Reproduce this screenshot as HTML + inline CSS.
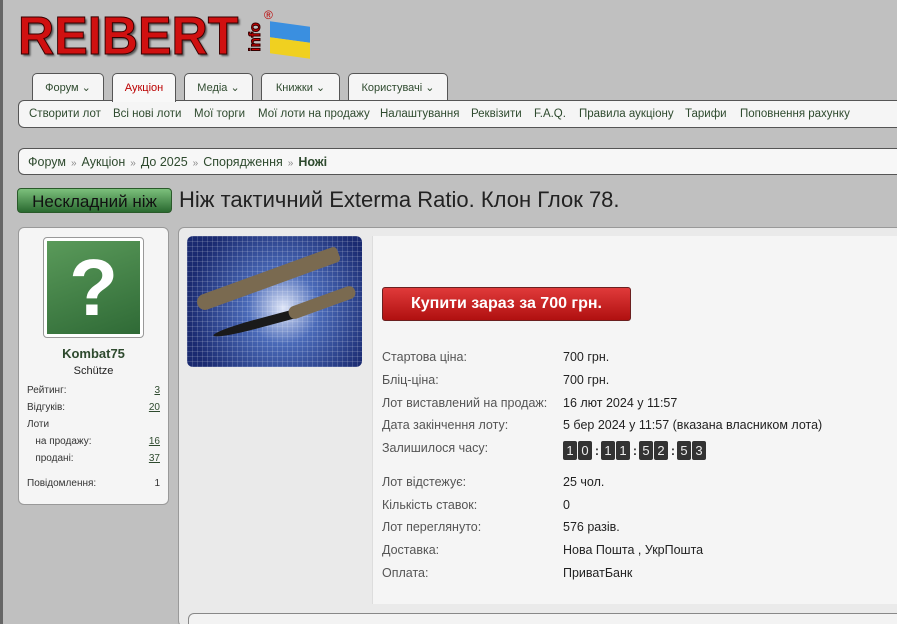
<!DOCTYPE html>
<html><head><meta charset="utf-8"><style>
*{box-sizing:border-box;margin:0;padding:0}
html,body{width:897px;height:624px;overflow:hidden}
body{background:#c0c0c0;font-family:"Liberation Sans",Arial,sans-serif;font-size:11px;color:#333;position:relative}
.a{position:absolute}
.logo{left:18px;top:10px;font-family:"Liberation Sans",sans-serif;font-weight:bold;font-size:54px;color:#d01010;letter-spacing:0px;-webkit-text-stroke:1px #300;line-height:52px;text-shadow:2px 2px 2px #555;transform:scaleX(0.93);transform-origin:left}
.tab{top:73px;height:28px;background:#f5f5f5;border:1px solid #555;border-bottom:none;border-radius:5px 5px 0 0;text-align:center;line-height:29px;font-size:11px;color:#2e4a2e}
.tab.act{background:#f8f8f8;color:#b00;height:29px;z-index:2}
.sub{left:18px;top:100px;width:900px;height:28px;background:#f5f5f5;border:1px solid #555;border-radius:6px;}
.sub span{position:absolute;top:7px;font-size:11.5px;color:#2e4a2e}
.bc{left:18px;top:148px;width:900px;height:27px;background:#f7f7f7;border:1px solid #555;border-radius:6px;padding:6px 9px;font-size:12.5px;color:#2e4a2e}
.bc i{font-style:normal;color:#888;margin:0 5px;font-size:10px}
.badge{left:17px;top:188px;width:155px;height:25px;border-radius:4px;background:linear-gradient(#7cc07c,#2a6a30);border:1px solid #2a5a2a;color:#111;font-size:17px;line-height:25px;text-align:center}
.title{left:179px;top:187px;font-size:22px;color:#222}
.user{left:18px;top:227px;width:151px;height:278px;background:#f5f5f5;border:1px solid #999;border-radius:6px}
.av{left:24px;top:9px;width:101px;height:101px;border:1px solid #999;border-radius:4px;background:#fff;padding:3px}
.av div{width:100%;height:100%;background:linear-gradient(160deg,#5a9a5a,#2f6a36);color:#fff;font-size:80px;font-weight:bold;text-align:center;line-height:94px}
.st{left:8px;width:133px;font-size:10px;color:#333}
.st u{float:right;color:#2e4a2e}
.main{left:178px;top:227px;width:730px;height:400px;background:#eaeaea;border:1px solid #999;border-radius:6px}
.img{left:187px;top:236px;width:175px;height:131px;border-radius:6px;background:radial-gradient(circle at 55% 55%,#dfe6f8,#4a6ab8 30%,#1a2a70 80%);overflow:hidden}
.info{left:372px;top:236px;width:530px;height:368px;background:#f5f5f5;border-left:1px solid #ddd}
.btn{left:382px;top:287px;width:249px;height:34px;background:linear-gradient(#e03a3a,#b01010);border:1px solid #6a2020;border-radius:3px;color:#fff;font-weight:bold;font-size:16px;text-align:center;line-height:32px}
.l{left:382px;top:0;font-size:12.5px;color:#555}
.v{left:563px;font-size:12.5px;color:#222}
.d{display:inline-block;width:14px;height:19px;background:#333;color:#eee;border-radius:2px;text-align:center;line-height:19px;font-size:13px;margin-right:1px}
.c{display:inline-block;width:8px;text-align:center;font-weight:bold;color:#333}
.bot{left:188px;top:613px;width:720px;height:20px;background:#f3f3f3;border:1px solid #888;border-radius:6px}
</style></head><body>
<div class="a" style="left:0;top:0;width:3px;height:624px;background:#666"></div>
<div class="a logo">REIBERT</div>
<div class="a" style="left:238px;top:28px;width:36px;text-align:center;font-size:16px;font-weight:bold;color:#c00;transform:rotate(-90deg);-webkit-text-stroke:1px #300">info</div>
<div class="a" style="left:264px;top:8px;font-size:12px;color:#b00">®</div>
<div class="a" style="left:270px;top:24px;width:40px;height:32px;transform:skewY(8deg)"><div style="height:50%;background:#3a8fe0"></div><div style="height:50%;background:#f0d020"></div></div>
<div class="a tab" style="left:32px;width:72px">Форум ⌄</div>
<div class="a tab act" style="left:112px;width:64px">Аукціон</div>
<div class="a tab" style="left:184px;width:69px">Медіа ⌄</div>
<div class="a tab" style="left:261px;width:79px">Книжки ⌄</div>
<div class="a tab" style="left:348px;width:100px">Користувачі ⌄</div>
<div class="a sub">
<span style="left:10px">Створити лот</span><span style="left:94px">Всі нові лоти</span><span style="left:175px">Мої торги</span><span style="left:239px">Мої лоти на продажу</span><span style="left:361px">Налаштування</span><span style="left:452px">Реквізити</span><span style="left:515px">F.A.Q.</span><span style="left:560px">Правила аукціону</span><span style="left:666px">Тарифи</span><span style="left:721px">Поповнення рахунку</span>
</div>
<div class="a bc">Форум<i>»</i>Аукціон<i>»</i>До 2025<i>»</i>Спорядження<i>»</i><b>Ножі</b></div>
<div class="a badge">Нескладний ніж</div>
<div class="a title">Ніж тактичний Exterma Ratio. Клон Глок 78.</div>
<div class="a user">
<div class="a av"><div>?</div></div>
<div class="a" style="left:0;width:149px;top:118px;text-align:center;font-weight:bold;font-size:13px;color:#2e4a2e">Kombat75</div>
<div class="a" style="left:0;width:149px;top:137px;text-align:center;font-size:11px;color:#222">Schütze</div>
<div class="a st" style="top:157px">Рейтинг:<u>3</u></div>
<div class="a st" style="top:174px">Відгуків:<u>20</u></div>
<div class="a st" style="top:191px">Лоти</div>
<div class="a st" style="top:208px">&nbsp;&nbsp;&nbsp;на продажу:<u>16</u></div>
<div class="a st" style="top:225px">&nbsp;&nbsp;&nbsp;продані:<u>37</u></div>
<div class="a st" style="top:250px">Повідомлення:<span style="float:right">1</span></div>
</div>
<div class="a main"></div>
<div class="a img">
<div class="a" style="inset:0;background-image:linear-gradient(rgba(255,255,255,.15) 1px,transparent 1px),linear-gradient(90deg,rgba(255,255,255,.15) 1px,transparent 1px);background-size:5px 5px"></div>
<div class="a" style="left:6px;top:35px;width:150px;height:16px;background:#7a6a50;border-radius:8px 4px 4px 8px;transform:rotate(-20deg)"></div>
<div class="a" style="left:25px;top:84px;width:85px;height:9px;background:#1a1a1a;border-radius:50% 0 0 50%;transform:rotate(-15deg)"></div>
<div class="a" style="left:100px;top:60px;width:70px;height:13px;background:#7a6a50;border-radius:6px;transform:rotate(-20deg)"></div>
</div>
<div class="a info"></div>
<div class="a btn">Купити зараз за 700 грн.</div>
<div class="a l" style="top:350px">Стартова ціна:</div><div class="a v" style="top:350px">700 грн.</div>
<div class="a l" style="top:373px">Бліц-ціна:</div><div class="a v" style="top:373px">700 грн.</div>
<div class="a l" style="top:396px">Лот виставлений на продаж:</div><div class="a v" style="top:396px">16 лют 2024 у 11:57</div>
<div class="a l" style="top:418px">Дата закінчення лоту:</div><div class="a v" style="top:418px">5 бер 2024 у 11:57 (вказана власником лота)</div>
<div class="a l" style="top:441px">Залишилося часу:</div>
<div class="a v" style="top:441px"><span class="d">1</span><span class="d">0</span><span class="c">:</span><span class="d">1</span><span class="d">1</span><span class="c">:</span><span class="d">5</span><span class="d">2</span><span class="c">:</span><span class="d">5</span><span class="d">3</span></div>
<div class="a l" style="top:475px">Лот відстежує:</div><div class="a v" style="top:475px">25 чол.</div>
<div class="a l" style="top:498px">Кількість ставок:</div><div class="a v" style="top:498px">0</div>
<div class="a l" style="top:520px">Лот переглянуто:</div><div class="a v" style="top:520px">576 разів.</div>
<div class="a l" style="top:543px">Доставка:</div><div class="a v" style="top:543px">Нова Пошта , УкрПошта</div>
<div class="a l" style="top:566px">Оплата:</div><div class="a v" style="top:566px">ПриватБанк</div>
<div class="a bot"></div>
</body></html>
